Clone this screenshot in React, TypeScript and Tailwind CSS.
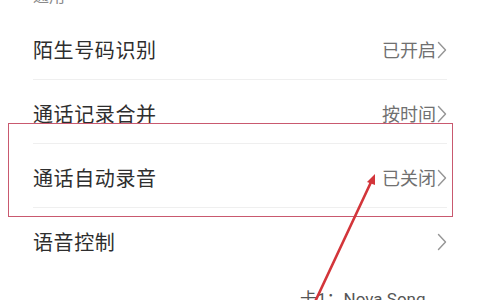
const rows = [
  { label: "陌生号码识别", value: "已开启" },
  { label: "通话记录合并", value: "按时间" },
  { label: "通话自动录音", value: "已关闭" },
  { label: "语音控制", value: "" },
];

function Chevron() {
  return (
    <svg width="10" height="18" viewBox="0 0 10 18" fill="none" stroke="#959595" strokeWidth="1.4" strokeLinecap="round" strokeLinejoin="round">
      <polyline points="1.5,1.5 8.5,9 1.5,16.5" />
    </svg>
  );
}

export default function App() {
  return (
    <div className="relative w-[480px] h-[300px] overflow-hidden bg-white font-['Noto_Sans_CJK_SC','Noto_Sans',sans-serif]">
      <div className="-mt-[16px] h-[32px] pl-[33px] text-[16px] leading-[22px] text-[#8a8a8a]">通用</div>
      <div className="ml-[33px] mr-[33px]">
        {rows.map((r, i) => (
          <div
            key={r.label}
            className={`flex h-[64px] items-center justify-between pt-[4px] ${i < rows.length - 1 ? "border-b border-[#efefef]" : ""}`}
          >
            <span className="text-[20px] tracking-[0.6px] text-[#2e2e2e]">{r.label}</span>
            <span className="flex items-center gap-[1px] text-[18px] text-[#707070]">
              {r.value}
              <Chevron />
            </span>
          </div>
        ))}
      </div>
      <div className="mt-[17px] pl-[300px] text-[17px] leading-[20px] text-[#555] font-['Roboto','Noto_Sans_CJK_SC',sans-serif]">
        卡1：Nova Song
      </div>
      <div className="absolute left-[8px] top-[123px] h-[94px] w-[445px] border-[1.5px] border-[#c9596f]" />
      <svg className="absolute inset-0" width="480" height="300" viewBox="0 0 480 300">
        <line x1="314" y1="304" x2="372" y2="180" stroke="#d3353a" strokeWidth="2.6" strokeLinecap="round" />
        <polygon points="375,174 367,182 375,185" fill="#d3353a" />
      </svg>
    </div>
  );
}
